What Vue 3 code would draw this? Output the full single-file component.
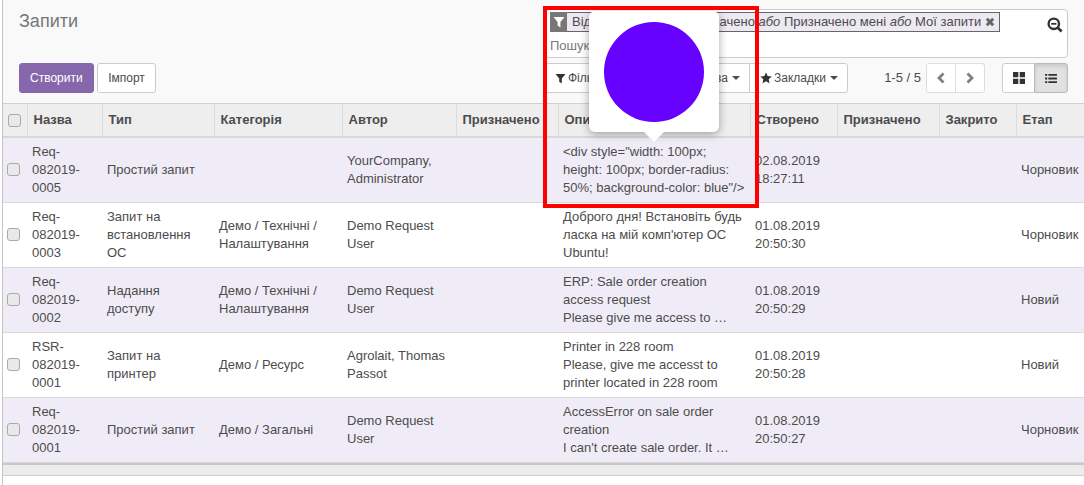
<script setup>
const columns = [
  { key: 'name', label: 'Назва', width: 75 },
  { key: 'type', label: 'Тип', width: 112 },
  { key: 'category', label: 'Категорія', width: 128 },
  { key: 'author', label: 'Автор', width: 114 },
  { key: 'assigned', label: 'Призначено', width: 102 },
  { key: 'text', label: 'Опис', width: 192 },
  { key: 'created', label: 'Створено', width: 87 },
  { key: 'assignee', label: 'Призначено', width: 102 },
  { key: 'closed', label: 'Закрито', width: 77 },
  { key: 'stage', label: 'Етап', width: 68 },
]

const rows = [
  {
    name: 'Req-082019-0005', type: 'Простий запит', category: '', author: 'YourCompany, Administrator',
    text: '<div style="width: 100px; height: 100px; border-radius: 50%; background-color: blue"/>',
    created: '02.08.2019 18:27:11', stage: 'Чорновик',
  },
  {
    name: 'Req-082019-0003', type: 'Запит на встановлення ОС', category: 'Демо / Технічні / Налаштування', author: 'Demo Request User',
    text: 'Доброго дня! Встановіть будь ласка на мій комп\'ютер ОС Ubuntu!',
    created: '01.08.2019 20:50:30', stage: 'Чорновик',
  },
  {
    name: 'Req-082019-0002', type: 'Надання доступу', category: 'Демо / Технічні / Налаштування', author: 'Demo Request User',
    text: 'ERP: Sale order creation access request\nPlease give me access to …',
    created: '01.08.2019 20:50:29', stage: 'Новий',
  },
  {
    name: 'RSR-082019-0001', type: 'Запит на принтер', category: 'Демо / Ресурс', author: 'Agrolait, Thomas Passot',
    text: 'Printer in 228 room\nPlease, give me accesst to printer located in 228 room',
    created: '01.08.2019 20:50:28', stage: 'Новий',
  },
  {
    name: 'Req-082019-0001', type: 'Простий запит', category: 'Демо / Загальні', author: 'Demo Request User',
    text: 'AccessError on sale order creation\nI can\'t create sale order. It …',
    created: '01.08.2019 20:50:27', stage: 'Чорновик',
  },
]
</script>

<template>
  <div class="page">
    <span class="edge-tick"></span>

    <header class="panel">
      <div class="panel-left">
        <h1 class="title">Запити</h1>
        <div class="actions">
          <button class="btn primary">Створити</button>
          <button class="btn">Імпорт</button>
        </div>
      </div>

      <div class="panel-right">
        <div class="search">
          <div class="facet">
            <span class="facet-icon">
              <svg viewBox="0 0 12 12" width="12" height="12"><path d="M0.5 1h11L7.4 6v5.4L4.6 9.6V6z" fill="#fff" /></svg>
            </span>
            <span class="facet-text">Відстежую <i>або</i> Не призначено <i>або</i> Призначено мені <i>або</i> Мої запити</span>
            <svg class="facet-x" viewBox="0 0 10 10" width="10" height="10"><path d="M1.8 1.8l6.4 6.4M8.2 1.8L1.8 8.2" stroke="#666" stroke-width="3" /></svg>
          </div>
          <div class="search-input">Пошук...</div>
          <svg class="search-icon" viewBox="0 0 16 16" width="16" height="16">
            <circle cx="6.8" cy="6.8" r="5.2" fill="none" stroke="#333" stroke-width="2.4" />
            <path d="M10.6 10.6l4 4" stroke="#333" stroke-width="2.8" />
            <path d="M4.2 6.8h5.2" stroke="#333" stroke-width="1.8" />
          </svg>
        </div>

        <div class="tools">
          <div class="group filters">
            <button class="tool filter-btn">
              <svg viewBox="0 0 12 12" width="11" height="11"><path d="M0.5 1h11L7.4 6v5.4L4.6 9.6V6z" fill="#333" /></svg>
              Фільтри <span class="caret"></span>
            </button>
            <button class="tool group-btn">Групувати за <span class="caret"></span></button>
            <button class="tool">
              <svg viewBox="0 0 12 12" width="12" height="12"><path d="M6 .4l1.7 3.7 4 .5-3 2.7.8 4L6 9.3l-3.5 2 .8-4-3-2.7 4-.5z" fill="#333" /></svg>
              Закладки <span class="caret"></span>
            </button>
          </div>

          <div class="pager">
            <span class="pager-text">1-5 / 5</span>
            <div class="group">
              <button class="square">
                <svg viewBox="0 0 10 12" width="10" height="12"><path d="M7.5 1.5L3 6l4.5 4.5" fill="none" stroke="#808080" stroke-width="2.8" /></svg>
              </button>
              <button class="square">
                <svg viewBox="0 0 10 12" width="10" height="12"><path d="M2.5 1.5L7 6l-4.5 4.5" fill="none" stroke="#808080" stroke-width="2.8" /></svg>
              </button>
            </div>
          </div>

          <div class="group views">
            <button class="view">
              <svg viewBox="0 0 12 12" width="12" height="12"><path d="M0 0h5.3v5.3H0zM6.7 0H12v5.3H6.7zM0 6.7h5.3V12H0zM6.7 6.7H12V12H6.7z" fill="#333" /></svg>
            </button>
            <button class="view active">
              <svg viewBox="0 0 13 12" width="12" height="11"><path d="M0 1h2.4v2H0zM3.6 1H13v2H3.6zM0 5h2.4v2H0zM3.6 5H13v2H3.6zM0 9h2.4v2H0zM3.6 9H13v2H3.6z" fill="#333" /></svg>
            </button>
          </div>
        </div>
      </div>
    </header>

    <table class="list">
      <colgroup>
        <col style="width: 24px" />
        <col v-for="c in columns" :key="c.key" :style="{ width: c.width + 'px' }" />
      </colgroup>
      <thead>
        <tr>
          <th class="check-cell"><span class="check"></span></th>
          <th v-for="c in columns" :key="c.key">{{ c.label }}</th>
        </tr>
      </thead>
      <tbody>
        <tr v-for="(r, i) in rows" :key="i">
          <td class="check-cell"><span class="check"></span></td>
          <td>{{ r.name }}</td>
          <td>{{ r.type }}</td>
          <td>{{ r.category }}</td>
          <td>{{ r.author }}</td>
          <td></td>
          <td class="text-cell">{{ r.text }}</td>
          <td>{{ r.created }}</td>
          <td></td>
          <td></td>
          <td>{{ r.stage }}</td>
        </tr>
      </tbody>
    </table>
    <div class="list-foot"></div>

    <div class="popover">
      <div class="circle"></div>
    </div>
    <div class="highlight"></div>
  </div>
</template>

<style scoped>
.page {
  position: relative;
  width: 1082px;
  height: 485px;
  margin-left: 2px;
  box-sizing: border-box;
  overflow: hidden;
  border-left: 1px solid #c4c4c4;
  background: #fff;
  font-family: "Liberation Sans", Arial, sans-serif;
  font-size: 13px;
  line-height: 18px;
  color: #4c4c4c;
}

.edge-tick {
  position: absolute;
  left: -3px;
  top: 96px;
  width: 2px;
  height: 23px;
  background: #7c5fa3;
}

.panel {
  display: flex;
  justify-content: space-between;
  height: 104px;
  box-sizing: border-box;
  padding: 9px 16px 0;
  background: #f9f9f9;
  border-bottom: 1px solid #cfcfcf;
}

.title {
  margin: 1px 0 0;
  font-size: 18px;
  font-weight: 400;
  line-height: 22px;
  color: #777;
}

.actions {
  display: flex;
  gap: 3px;
  margin-top: 31px;
}

.btn {
  height: 30px;
  padding: 0 10.5px;
  border: 1px solid #ccc;
  border-radius: 3px;
  background: #fff;
  font: inherit;
  font-size: 12px;
  color: #4c4c4c;
}

.btn.primary {
  padding: 0 10px;
  border-color: #8667ac;
  background: #8667ac;
  color: #fff;
}

.panel-right {
  width: 523px;
}

.search {
  position: relative;
  height: 49px;
  box-sizing: border-box;
  padding: 2px 4px;
  border: 1px solid #ccc;
  border-radius: 4px;
  background: #fff;
}

.facet {
  display: inline-flex;
  align-items: center;
  height: 20px;
  box-sizing: border-box;
  border: 1px solid #666;
  background: #ece9f3;
}

.facet-icon {
  display: flex;
  align-items: center;
  justify-content: center;
  width: 17px;
  height: 20px;
  margin: -1px 0 -1px -1px;
  background: #777;
}

.facet-text {
  padding: 0 4px 0 5px;
  white-space: nowrap;
}

.facet-x {
  margin-right: 4px;
}

.search-input {
  margin-top: 4px;
  color: #777;
}

.search-icon {
  position: absolute;
  right: 4px;
  top: 7px;
}

.tools {
  display: flex;
  align-items: center;
  margin-top: 5px;
}

.group {
  display: flex;
}

.group button {
  margin-left: -1px;
}

.group button:first-child {
  margin-left: 0;
  border-radius: 3px 0 0 3px;
}

.group button:last-child {
  border-radius: 0 3px 3px 0;
}

.tool,
.square,
.view {
  height: 30px;
  border: 1px solid #ccc;
  background: #fff;
  font: inherit;
  font-size: 12px;
  color: #4c4c4c;
  white-space: nowrap;
}

.tool {
  display: flex;
  align-items: center;
  gap: 2px;
  padding: 0 9px 0 10px;
}

.filter-btn {
  width: 100px;
  padding-left: 9px;
}

.group-btn {
  width: 106px;
  justify-content: flex-end;
}

.caret {
  width: 0;
  height: 0;
  margin-left: 2px;
  border-top: 4px solid #4c4c4c;
  border-left: 4px solid transparent;
  border-right: 4px solid transparent;
}

.pager {
  display: flex;
  align-items: center;
  gap: 5px;
  margin-left: auto;
}

.square {
  width: 30px;
  display: flex;
  align-items: center;
  justify-content: center;
  border-color: #ddd;
}

.views {
  margin-left: 17px;
}

.view {
  width: 33px;
  display: flex;
  align-items: center;
  justify-content: center;
}

.view.active {
  width: 34px;
  border-color: #bbb;
  background: #e2e2e2;
  box-shadow: inset 0 2px 4px rgba(0, 0, 0, 0.12);
}

.list {
  width: 1081px;
  table-layout: fixed;
  border-collapse: collapse;
}

th {
  height: 33px;
  padding: 0 5px 0 6px;
  box-sizing: border-box;
  border-right: 1px solid #dcdcdc;
  border-bottom: 2px solid #d8d8d8;
  background: #eee;
  text-align: left;
  font-weight: 700;
  white-space: nowrap;
  overflow: hidden;
}

th:last-child {
  border-right: 0;
}

td {
  height: 65px;
  padding: 0 5px;
  box-sizing: border-box;
  border-bottom: 1px solid #d9d9d9;
  vertical-align: middle;
}

tbody tr:nth-child(odd) {
  background: #f0ecf7;
}

th.check-cell {
  padding: 0 0 0 5px;
  line-height: 0;
}

td.check-cell {
  padding: 0 0 0 4px;
  line-height: 0;
}

.check {
  display: inline-block;
  width: 13px;
  height: 13px;
  box-sizing: border-box;
  border: 1px solid #aaa;
  border-radius: 3px;
  background: #e9e9e9;
}

.text-cell {
  white-space: pre-line;
}

.list-foot {
  height: 13px;
  box-sizing: border-box;
  border-top: 2px solid #c8c8c8;
  border-bottom: 1px solid #d0d0d0;
  background: #ececec;
}

.popover {
  position: absolute;
  left: 586px;
  top: 11px;
  width: 130px;
  height: 121px;
  box-sizing: border-box;
  padding: 11px 15px;
  border-radius: 6px;
  background: #fff;
  box-shadow: 0 2px 8px rgba(0, 0, 0, 0.35);
}

.popover::after {
  content: "";
  position: absolute;
  left: 55px;
  bottom: -10px;
  border-top: 10px solid #fff;
  border-left: 10px solid transparent;
  border-right: 10px solid transparent;
}

.circle {
  width: 100px;
  height: 100px;
  border-radius: 50%;
  background: #6600ff;
}

.highlight {
  position: absolute;
  left: 540px;
  top: 6px;
  width: 216px;
  height: 202px;
  box-sizing: border-box;
  border: 4px solid #f00;
}
</style>
